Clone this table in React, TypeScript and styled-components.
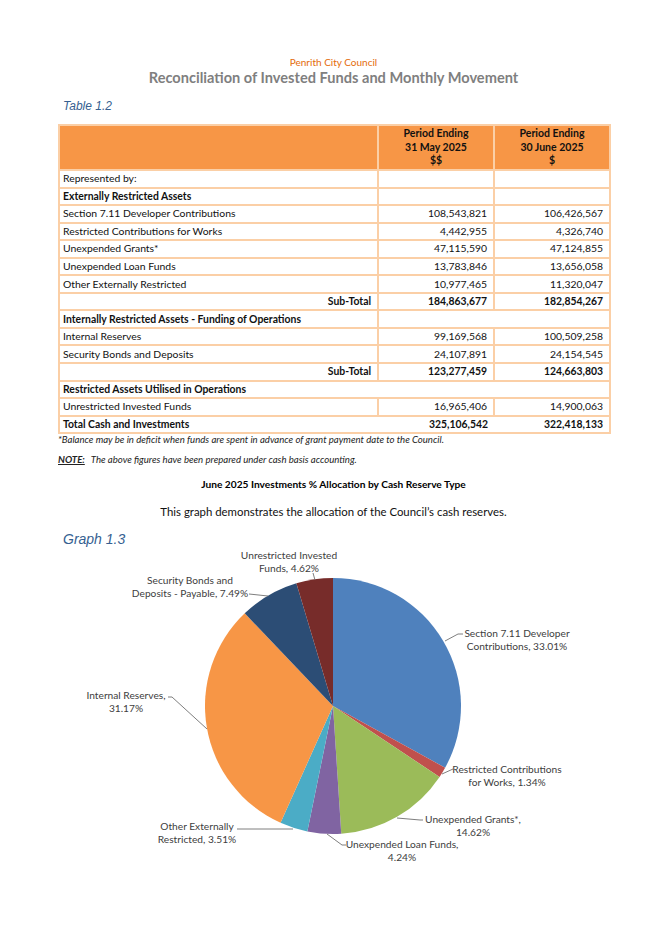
import React from "react";
import styled, { createGlobalStyle } from "styled-components";

const GlobalStyle = createGlobalStyle`
  html, body { margin: 0; padding: 0; background: #ffffff; }
  body { font-family: Lato, "Open Sans", sans-serif; color: #000; }
`;

const Page = styled.div`
  width: 656px;
  box-sizing: border-box;
  padding: 55px 47px 40px 58px;
`;

const OrgName = styled.div`
  text-align: center;
  color: #e46c0a;
  font-size: 10px;
  line-height: 14px;
`;

const Title = styled.h1`
  margin: 0;
  text-align: center;
  color: #7f7f7f;
  font-size: 14.6px;
  font-weight: 700;
  line-height: 18px;
`;

const Caption = styled.div<{ $size: number; $mt: number }>`
  margin-top: ${(p) => p.$mt}px;
  padding-left: 5px;
  font-family: "Liberation Sans", Arial, sans-serif;
  font-style: italic;
  color: #365f91;
  font-size: ${(p) => p.$size}px;
  line-height: ${(p) => p.$size + 2}px;
`;

const Table = styled.table`
  margin-top: 11px;
  width: 551px;
  border-collapse: collapse;
  table-layout: fixed;
  font-size: 10.4px;
  border: 2px solid #fbcfa6;
`;

const HeadRow = styled.tr`
  background: #f79646;
  height: 45px;
`;

const HeadCell = styled.th`
  padding: 0;
  font-weight: 700;
  font-size: 10.5px;
  text-align: center;
  line-height: 13.5px;
  color: #111;
  border-left: 2px solid #fbcfa6;
  &:first-child { border-left: none; }
`;

const Row = styled.tr`
  height: 17.55px;
  border-top: 2px solid #fbcfa6;
`;

const Cell = styled.td<{ $align?: string; $bold?: boolean; $divider?: boolean }>`
  padding: 0 6px 0 3px;
  text-align: ${(p) => p.$align || "left"};
  font-weight: ${(p) => (p.$bold ? 700 : 400)};
  line-height: 15px;
  white-space: nowrap;
  color: #111;
  border-left: ${(p) => (p.$divider ? "2px solid #fbcfa6" : "none")};
`;

const Footnote = styled.div<{ $mt: number }>`
  margin-top: ${(p) => p.$mt}px;
  font-size: 9.6px;
  line-height: 11px;
  font-style: italic;
  color: #222;
`;

const NoteLabel = styled.span`
  font-weight: 700;
  text-decoration: underline;
  margin-right: 4px;
`;

const ChartTitle = styled.div`
  margin-top: 13px;
  text-align: center;
  font-weight: 700;
  font-size: 10.2px;
  line-height: 12px;
`;

const Description = styled.div`
  margin-top: 14px;
  text-align: center;
  font-size: 11.4px;
  line-height: 15px;
  color: #111;
`;

const ChartSvg = styled.svg`
  display: block;
  width: 551px;
  height: 330px;
  font-family: Lato, "Open Sans", sans-serif;
`;

type Line = { label: string; may?: string; june?: string; kind: "plain" | "section" | "subtotal" | "merged" | "total" | "first" };

const rows: Line[] = [
  { label: "Represented by:", kind: "first" },
  { label: "Externally Restricted Assets", kind: "section" },
  { label: "Section 7.11 Developer Contributions", may: "108,543,821", june: "106,426,567", kind: "plain" },
  { label: "Restricted Contributions for Works", may: "4,442,955", june: "4,326,740", kind: "plain" },
  { label: "Unexpended Grants*", may: "47,115,590", june: "47,124,855", kind: "plain" },
  { label: "Unexpended Loan Funds", may: "13,783,846", june: "13,656,058", kind: "plain" },
  { label: "Other Externally Restricted", may: "10,977,465", june: "11,320,047", kind: "plain" },
  { label: "Sub-Total", may: "184,863,677", june: "182,854,267", kind: "subtotal" },
  { label: "Internally Restricted Assets - Funding of Operations", kind: "merged" },
  { label: "Internal Reserves", may: "99,169,568", june: "100,509,258", kind: "plain" },
  { label: "Security Bonds and Deposits", may: "24,107,891", june: "24,154,545", kind: "plain" },
  { label: "Sub-Total", may: "123,277,459", june: "124,663,803", kind: "subtotal" },
  { label: "Restricted Assets Utilised in Operations", kind: "total" },
  { label: "Unrestricted Invested Funds", may: "16,965,406", june: "14,900,063", kind: "plain" },
  { label: "Total Cash and Investments", may: "325,106,542", june: "322,418,133", kind: "total" },
];

const renderRow = (r: Line, i: number) => {
  switch (r.kind) {
    case "first":
      return (
        <Row key={i}>
          <Cell>{r.label}</Cell>
          <Cell $divider />
          <Cell $divider />
        </Row>
      );
    case "section":
      return (
        <Row key={i}>
          <Cell $bold>{r.label}</Cell>
          <Cell $divider />
          <Cell $divider />
        </Row>
      );
    case "merged":
      return (
        <Row key={i}>
          <Cell $bold>{r.label}</Cell>
          <Cell $divider colSpan={2} />
        </Row>
      );
    case "subtotal":
      return (
        <Row key={i}>
          <Cell $bold $align="right">{r.label}</Cell>
          <Cell $bold $align="right" $divider>{r.may}</Cell>
          <Cell $bold $align="right" $divider>{r.june}</Cell>
        </Row>
      );
    case "total":
      return (
        <Row key={i}>
          <Cell $bold>{r.label}</Cell>
          <Cell $bold $align="right">{r.may}</Cell>
          <Cell $bold $align="right">{r.june}</Cell>
        </Row>
      );
    default:
      return (
        <Row key={i}>
          <Cell>{r.label}</Cell>
          <Cell $align="right" $divider>{r.may}</Cell>
          <Cell $align="right" $divider>{r.june}</Cell>
        </Row>
      );
  }
};

const slices = [
  { v: 33.01, c: "#4f81bd" },
  { v: 1.34, c: "#c0504d" },
  { v: 14.62, c: "#9bbb59" },
  { v: 4.24, c: "#8064a2" },
  { v: 3.51, c: "#4bacc6" },
  { v: 31.17, c: "#f79646" },
  { v: 7.49, c: "#2c4d75" },
  { v: 4.62, c: "#772c2a" },
];

const CX = 275;
const CY = 159;
const R = 128;

const pt = (deg: number) => {
  const a = (deg * Math.PI) / 180;
  return [CX + R * Math.sin(a), CY - R * Math.cos(a)];
};

const Pie = () => {
  let acc = 0;
  return (
    <g>
      {slices.map((s, i) => {
        const start = (acc / 100) * 360;
        acc += s.v;
        const end = (acc / 100) * 360;
        const [x1, y1] = pt(start);
        const [x2, y2] = pt(end);
        const large = end - start > 180 ? 1 : 0;
        return (
          <path
            key={i}
            d={`M${CX},${CY} L${x1.toFixed(2)},${y1.toFixed(2)} A${R},${R} 0 ${large} 1 ${x2.toFixed(2)},${y2.toFixed(2)} Z`}
            fill={s.c}
          />
        );
      })}
    </g>
  );
};

const labels: { lines: string[]; x: number; y: number; path: string }[] = [
  { lines: ["Unrestricted Invested", "Funds, 4.62%"], x: 231, y: 12, path: "M255,26 L257,33" },
  { lines: ["Security Bonds and", "Deposits - Payable, 7.49%"], x: 132, y: 37, path: "M191,47 L210,49" },
  { lines: ["Section 7.11 Developer", "Contributions, 33.01%"], x: 459, y: 90, path: "M387,94 L400,87 L405,87" },
  { lines: ["Restricted Contributions", "for Works, 1.34%"], x: 449, y: 226, path: "M384,227 L395,222" },
  { lines: ["Unexpended Grants*,", "14.62%"], x: 415, y: 276, path: "M339,271 L362,273 L365,273" },
  { lines: ["Unexpended Loan Funds,", "4.24%"], x: 344, y: 301, path: "M269,287 L284,298 L288,298" },
  { lines: ["Other Externally", "Restricted, 3.51%"], x: 139, y: 283, path: "M179,282 L235,282" },
  { lines: ["Internal Reserves,", "31.17%"], x: 68, y: 152, path: "M110,150 L114,150 L149,182" },
];

export default function App() {
  return (
    <>
      <GlobalStyle />
      <Page>
        <OrgName>Penrith City Council</OrgName>
        <Title>Reconciliation of Invested Funds and Monthly Movement</Title>
        <Caption $size={12} $mt={12}>Table 1.2</Caption>
        <Table>
          <colgroup>
            <col style={{ width: 319 }} />
            <col style={{ width: 116 }} />
            <col style={{ width: 116 }} />
          </colgroup>
          <thead>
            <HeadRow>
              <HeadCell />
              <HeadCell>
                Period Ending
                <br />
                31 May 2025
                <br />
                $$
              </HeadCell>
              <HeadCell>
                Period Ending
                <br />
                30 June 2025
                <br />$
              </HeadCell>
            </HeadRow>
          </thead>
          <tbody>{rows.map(renderRow)}</tbody>
        </Table>
        <Footnote $mt={0}>
          *Balance may be in deficit when funds are spent in advance of grant payment date to the Council.
        </Footnote>
        <Footnote $mt={9}>
          <NoteLabel>NOTE:</NoteLabel> The above figures have been prepared under cash basis accounting.
        </Footnote>
        <ChartTitle>June 2025 Investments % Allocation by Cash Reserve Type</ChartTitle>
        <Description>This graph demonstrates the allocation of the Council’s cash reserves.</Description>
        <Caption $size={14} $mt={12}>Graph 1.3</Caption>
        <ChartSvg viewBox="0 0 551 330">
          <Pie />
          {labels.map((l, i) => (
            <g key={i}>
              <path d={l.path} fill="none" stroke="#6f6f6f" strokeWidth={0.9} />
              {l.lines.map((t, j) => (
                <text key={j} x={l.x} y={l.y + j * 13} textAnchor="middle" fontSize={10.2} fill="#404040">
                  {t}
                </text>
              ))}
            </g>
          ))}
        </ChartSvg>
      </Page>
    </>
  );
}
